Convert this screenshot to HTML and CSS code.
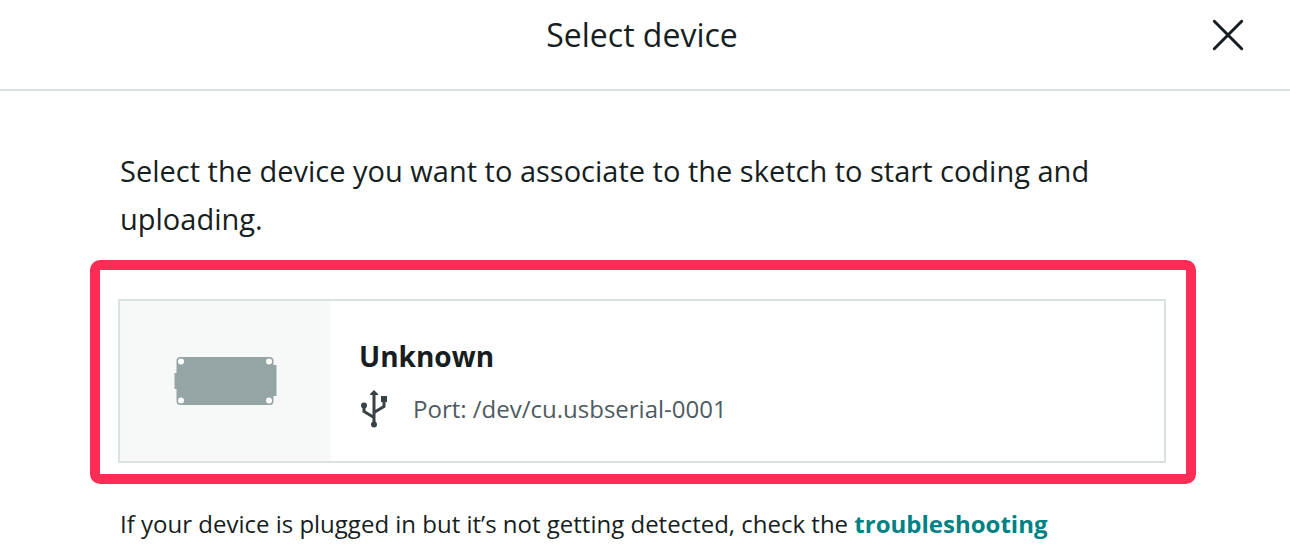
FILE: index.html
```html
<!DOCTYPE html>
<html lang="en">
<head>
  <meta charset="UTF-8">
  <meta name="viewport" content="width=device-width, initial-scale=1.0">
  <title>Select device</title>
  <link rel="stylesheet" href="styles.css">
</head>
<body>

  <header class="dialog-header">
    <h1>Select device</h1>
    <button class="close" type="button" aria-label="Close">
      <svg width="32" height="32" viewBox="0 0 32 32">
        <path d="M2.3 2.3 L29.7 29.7 M29.7 2.3 L2.3 29.7" />
      </svg>
    </button>
  </header>

  <main class="dialog-body">
    <p class="intro">Select the device you want to associate to the sketch to start coding and uploading.</p>

    <!-- Highlighted device list -->
    <div class="highlight">
      <button class="device" type="button">
        <span class="device-image">
          <svg width="104" height="50" viewBox="0 0 104 50">
            <path class="connector" d="M0.500 17h3v16h-3z M99 9h3.500v31h-3.500z" />
            <rect class="board" x="2.500" y="1" width="97" height="48" rx="4" />
            <circle cx="7" cy="5.500" r="3" />
            <circle cx="95" cy="5.500" r="3" />
            <circle cx="7" cy="44.500" r="3" />
            <circle cx="95" cy="44.500" r="3" />
          </svg>
        </span>
        <span class="device-info">
          <strong class="device-name">Unknown</strong>
          <span class="device-port">
            <svg width="28" height="40" viewBox="0 0 28 40">
              <path class="wire" d="M15 5v30 M5 18v4.500l10 6 M25 11v6.500l-10 6" />
              <path d="M15 1l4 4v1h-8v-1z M22 7h6v6h-6z" />
              <circle cx="5" cy="16.500" r="3" />
              <circle cx="15" cy="35.500" r="3" />
            </svg>
            <span>Port: /dev/cu.usbserial-0001</span>
          </span>
        </span>
      </button>
    </div>

    <p class="help">If your device is plugged in but it’s not getting detected, check the <a href="#">troubleshooting</a></p>
  </main>

</body>
</html>
```

FILE: styles.css
```css
body {
  margin: 0;
  font-family: "Open Sans", sans-serif;
  background: #fff;
  color: #171e21;
}

.dialog-header {
  display: grid;
  grid-template-columns: 1fr auto 1fr;
  align-items: center;
  padding: 11px 46px 30px 40px;
  border-bottom: 2px solid #dae3e3;
}

.dialog-header h1 {
  grid-column: 2;
  margin: 0;
  font-size: 32px;
  font-weight: 400;
  line-height: 48px;
}

.close {
  justify-self: end;
  display: flex;
  padding: 0;
  border: none;
  background: none;
  cursor: pointer;
}

.close path {
  fill: none;
  stroke: #171e21;
  stroke-width: 3;
  stroke-linecap: round;
}

.dialog-body {
  padding: 56px 94px 0 90px;
}

.intro {
  margin: 0 30px 17px;
  font-size: 29px;
  line-height: 48px;
}

.highlight {
  padding: 29px 20px 11px 18px;
  border: 10px solid #ff2d55;
  border-radius: 10px;
}

.device {
  display: flex;
  width: 100%;
  padding: 0;
  border: 2px solid #dae3e3;
  background: #fff;
  color: inherit;
  font-family: inherit;
  text-align: left;
  cursor: pointer;
}

.device-image {
  display: flex;
  align-items: center;
  justify-content: center;
  width: 211px;
  background: #f7f9f9;
}

.device-image .board,
.device-image .connector {
  fill: #95a5a6;
}

.device-image circle {
  fill: #fff;
}

.device-info {
  padding: 35px 28px 31px;
}

.device-name {
  display: block;
  font-size: 28px;
  line-height: 40px;
}

.device-port {
  display: flex;
  align-items: center;
  gap: 26px;
  margin-top: 12px;
  color: #4e5b61;
  font-size: 24px;
  line-height: 42px;
}

.device-port svg {
  fill: #374146;
}

.device-port .wire {
  fill: none;
  stroke: #374146;
  stroke-width: 3;
}

.help {
  margin: 20px 30px 0;
  font-size: 24px;
  line-height: 40px;
}

.help a {
  color: #008184;
  font-weight: 700;
  text-decoration: none;
}
```
